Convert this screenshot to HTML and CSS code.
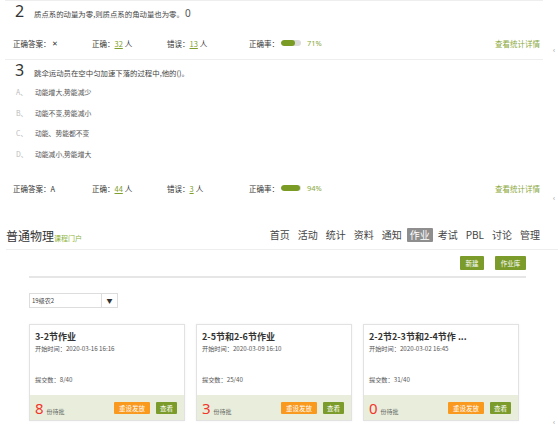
FILE: index.html
```html
<!DOCTYPE html>
<html lang="zh-CN">
<head>
<meta charset="utf-8">
<title>普通物理 作业</title>
<link rel="stylesheet" href="styles.css">
</head>
<body>
<div class="quiz">
  <div class="q q-first">
    <div class="q-title"><span class="q-num">2</span><span class="q-text">质点系的动量为零,则质点系的角动量也为零。</span><span class="q-blank">0</span></div>
    <div class="stats">
      <span class="st st-ans">正确答案：<span class="mark">✕</span></span>
      <span class="st st-right">正确：<span class="num">32</span> 人</span>
      <span class="st st-wrong">错误：<span class="num">13</span> 人</span>
      <span class="st st-rate">正确率：<span class="bar"><span class="fill f71"></span></span><span class="pct">71%</span></span>
      <span class="detail">查看统计详情</span>
    </div>
  </div>
  <div class="q">
    <div class="q-title"><span class="q-num">3</span><span class="q-text">跳伞运动员在空中匀加速下落的过程中,他的()。</span></div>
    <ul class="opts">
      <li><span class="opt-l">A、</span>动能增大,势能减少</li>
      <li><span class="opt-l">B、</span>动能不变,势能减小</li>
      <li><span class="opt-l">C、</span>动能、势能都不变</li>
      <li><span class="opt-l">D、</span>动能减小,势能增大</li>
    </ul>
    <div class="stats stats2">
      <span class="st st-ans">正确答案：A</span>
      <span class="st st-right">正确：<span class="num">44</span> 人</span>
      <span class="st st-wrong">错误：<span class="num">3</span> 人</span>
      <span class="st st-rate">正确率：<span class="bar"><span class="fill f94"></span></span><span class="pct">94%</span></span>
      <span class="detail">查看统计详情</span>
    </div>
  </div>
</div>

<div class="header">
  <div class="brand"><span class="course">普通物理</span><span class="portal">课程门户</span></div>
  <nav class="nav">
    <span class="nav-i">首页</span>
    <span class="nav-i">活动</span>
    <span class="nav-i">统计</span>
    <span class="nav-i">资料</span>
    <span class="nav-i">通知</span>
    <span class="nav-i active">作业</span>
    <span class="nav-i">考试</span>
    <span class="nav-i">PBL</span>
    <span class="nav-i">讨论</span>
    <span class="nav-i">管理</span>
  </nav>
</div>

<div class="content">
  <div class="actions">
    <span class="btn btn-green btn-new">新建</span>
    <span class="btn btn-green btn-lib">作业库</span>
  </div>
  <div class="divider"></div>
  <div class="select"><span class="sel-text">19级农2</span><span class="sel-arrow">▼</span></div>
  <div class="cards">
    <div class="card">
      <div class="card-body">
        <div class="card-title">3-2节作业</div>
        <div class="card-time">开始时间：2020-03-16 16:16</div>
        <div class="card-sub">提交数：8/40</div>
      </div>
      <div class="card-foot">
        <span class="pending"><span class="pnum">8</span><span class="plabel">份待批</span></span>
        <span class="btn btn-orange">重设发放</span>
        <span class="btn btn-green btn-view">查看</span>
      </div>
    </div>
    <div class="card">
      <div class="card-body">
        <div class="card-title">2-5节和2-6节作业</div>
        <div class="card-time">开始时间：2020-03-09 16:10</div>
        <div class="card-sub">提交数：25/40</div>
      </div>
      <div class="card-foot">
        <span class="pending"><span class="pnum">3</span><span class="plabel">份待批</span></span>
        <span class="btn btn-orange">重设发放</span>
        <span class="btn btn-green btn-view">查看</span>
      </div>
    </div>
    <div class="card">
      <div class="card-body">
        <div class="card-title">2-2节2-3节和2-4节作 ...</div>
        <div class="card-time">开始时间：2020-03-02 16:45</div>
        <div class="card-sub">提交数：31/40</div>
      </div>
      <div class="card-foot">
        <span class="pending"><span class="pnum">0</span><span class="plabel">份待批</span></span>
        <span class="btn btn-orange">重设发放</span>
        <span class="btn btn-green btn-view">查看</span>
      </div>
    </div>
  </div>
</div>
<span class="edge e1">‹</span>
<span class="edge e2">‹</span>
<span class="edge e3">‹</span>
</body>
</html>
```

FILE: styles.css
```css
* { box-sizing: border-box; }
html, body { margin: 0; padding: 0; background: #fff; }
body {
  width: 558px;
  height: 428px;
  overflow: hidden;
  position: relative;
  font-family: "Noto Sans CJK SC", "Noto Sans", sans-serif;
  color: #333;
}

.quiz { margin-left: 5px; width: 538px; }
.q-first { border-top: 1px solid #eee; border-bottom: 1px solid #eee; padding-bottom: 9px; }

.q-title {
  display: flex;
  align-items: baseline;
  height: 20px;
  padding-left: 10px;
  line-height: 20px;
}
.q-num { font-size: 16px; color: #333; width: 19px; font-family: "Noto Sans", sans-serif; }
.q-text { font-size: 7.4px; color: #444; }
.q-blank { font-size: 10px; color: #555; margin-left: 1px; font-family: "Noto Sans", sans-serif; }

.stats {
  display: flex;
  align-items: center;
  height: 14px;
  margin-top: 15px;
  font-size: 7.5px;
  color: #333;
  padding-left: 8px;
}
.stats2 { margin-top: 17px; }
.st { display: flex; align-items: center; white-space: nowrap; }
.st-ans { width: 79px; }
.st-right { width: 75px; }
.st-wrong { width: 82px; }
.mark { font-size: 7px; margin-left: 1px; }
.num { color: #7fa02c; text-decoration: underline; text-underline-offset: 1px; margin-right: 2px; }
.bar {
  display: inline-block;
  width: 20px;
  height: 6px;
  border-radius: 3px;
  background: #dcdcdc;
  margin-left: 2px;
  overflow: hidden;
}
.fill { display: block; height: 100%; background: #7a9c25; border-radius: 3px; }
.f71 { width: 72%; }
.f94 { width: 95%; }
.pct { color: #8aa83c; margin-left: 6px; font-family: "Noto Sans", sans-serif; }
.detail { margin-left: auto; color: #8aa83c; margin-right: 3px; }

.opts { list-style: none; margin: 2px 0 0; padding: 0 0 0 11px; }
.opts li {
  height: 20.5px;
  line-height: 20.5px;
  font-size: 6.8px;
  color: #555;
  display: flex;
  align-items: center;
}
.opt-l { color: #bbb; width: 19px; font-size: 7px; }

.header {
  margin-top: 26px;
  margin-left: 6px;
  height: 29px;
  border-bottom: 1px solid #eee;
  display: flex;
  align-items: center;
  padding-right: 15px;
}
.brand { display: flex; align-items: baseline; }
.course { font-size: 12px; color: #333; letter-spacing: 0; }
.portal { font-size: 7px; color: #8db33a; }
.nav { margin-left: auto; display: flex; gap: 2px; align-items: center; }
.nav-i {
  font-size: 10px;
  color: #444;
  padding: 0 3px;
  height: 14px;
  line-height: 14px;
}
.nav-i.active { background: #8e8e8e; color: #fff; border-radius: 1px; }

.content { margin-left: 29px; width: 497px; }
.actions { display: flex; justify-content: flex-end; gap: 11px; margin-top: 6px; }
.btn {
  display: inline-flex;
  align-items: center;
  justify-content: center;
  height: 14px;
  font-size: 6.5px;
  color: #fff;
  border-radius: 1px;
}
.btn-green { background: #7b9c2a; }
.btn-new { width: 24px; }
.btn-lib { width: 31px; }
.divider { height: 2px; background: #e6e6e6; margin-top: 6px; }

.select {
  margin-top: 15px;
  width: 89px;
  height: 15px;
  border: 1px solid #ddd;
  display: flex;
  align-items: center;
}
.sel-text { flex: 1; font-size: 6px; color: #444; padding-left: 2px; }
.sel-arrow {
  width: 16px;
  height: 100%;
  border-left: 1px solid #ddd;
  font-size: 6px;
  display: flex;
  align-items: center;
  justify-content: center;
  color: #333;
}

.cards {
  display: grid;
  grid-template-columns: 156px 156px 156px;
  gap: 11px;
  margin-top: 16px;
}
.card {
  height: 97px;
  border: 1px solid #e2e2e2;
  box-shadow: 0 0 2px rgba(0,0,0,0.06);
  display: flex;
  flex-direction: column;
}
.card-body { flex: 1; padding: 6px 5px 0; }
.card-title { font-size: 9px; font-weight: bold; color: #333; line-height: 12px; white-space: nowrap; }
.card-time { font-size: 6.2px; color: #555; margin-top: 1px; line-height: 10px; }
.card-sub { font-size: 6.2px; color: #555; margin-top: 21px; line-height: 10px; }
.card-foot {
  height: 25px;
  background: #e8eedb;
  display: flex;
  align-items: center;
  padding: 0 7px 0 5px;
  gap: 6px;
}
.pending { display: flex; align-items: baseline; margin-right: auto; }
.pnum { font-size: 15px; color: #f2352b; font-family: "Noto Sans", sans-serif; line-height: 16px; }
.plabel { font-size: 6px; color: #666; margin-left: 3px; }
.btn-orange { background: #f99a1f; width: 36px; height: 12px; }
.btn-view { width: 21px; height: 12px; }

.edge { position: absolute; left: 553px; font-size: 7px; color: #888; line-height: 7px; }
.e1 { top: 46px; }
.e2 { top: 194px; }
.e3 { top: 418px; }
```
